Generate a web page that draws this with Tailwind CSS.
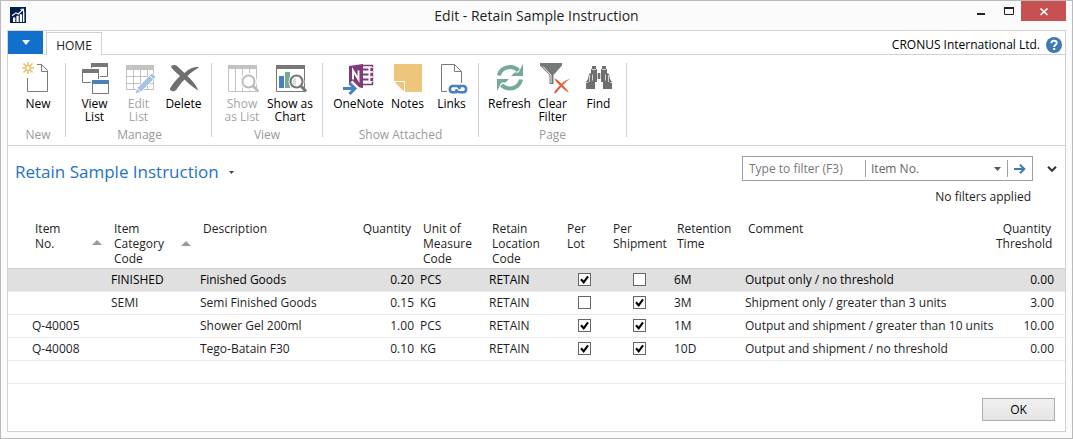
<!DOCTYPE html>
<html lang="en">
<head>
<meta charset="utf-8">
<meta name="viewport" content="width=device-width, initial-scale=1">
<title>Edit - Retain Sample Instruction</title>
<script src="https://cdn.jsdelivr.net/npm/@tailwindcss/browser@4"></script>
</head>
<body class="font-['Open_Sans','Noto_Sans',sans-serif] text-xs text-[#1e1e1e]">
<svg class="hidden" aria-hidden="true">
  <symbol id="tick" viewBox="0 0 13 13"><path d="M3 6.2 5.7 9.3 10 3.4" fill="none" stroke="#000" stroke-width="2.1"/></symbol>
  <symbol id="sort" viewBox="0 0 10 5"><path d="M5 0 10 5H0z" fill="#9b9b9b"/></symbol>
</svg>
<div class="flex min-h-screen flex-col border border-[#bababa] bg-[#fbfbfb] px-1.5 pb-1.5">
  <header class="grid h-[29px] grid-cols-[1fr_auto_1fr] items-start">
    <svg class="mt-1.5 ml-[3px] h-4 w-4" viewBox="0 0 16 16" aria-hidden="true">
      <path fill="#00204f" d="M0 0h16v16H0z"/>
      <path fill="#fff" d="M3 10.5h2.3V15H3zM6.4 8.8h2.3V15H6.4zM9.8 7.2h2.3V15H9.8zM13 4.5h1.4V15H13z"/>
      <path d="M2 8.8 6 5.8 8.3 7 13 2.5M10.5 2.3H13.5V5" fill="none" stroke="#fff" stroke-width="1.1"/>
    </svg>
    <h1 class="pt-1 text-sm leading-[22px]">Edit - Retain Sample Instruction</h1>
    <div class="flex justify-end">
      <button type="button" aria-label="Minimize" class="flex h-5 w-[27px] items-center justify-center"><svg class="h-5 w-[27px]" viewBox="0 0 27 20"><path fill="#222" d="M10 12h8v2h-8z"/></svg></button>
      <button type="button" aria-label="Maximize" class="h-5 w-[27px]"><svg class="h-5 w-[27px]" viewBox="0 0 27 20"><path d="M10.500 7.500h9v6h-9z" fill="none" stroke="#222"/><path fill="#222" d="M10 6h10v2H10z"/></svg></button>
      <button type="button" aria-label="Close" class="h-5 w-[45px] bg-[#c75050]"><svg class="h-5 w-[45px]" viewBox="0 0 45 20"><path d="m19.500 7.500 7 6.500M26.500 7.500l-7 6.500" stroke="#fff" stroke-width="1.7"/></svg></button>
    </div>
  </header>

  <main class="flex grow flex-col border border-[#d2d2d2] bg-white">
    <nav class="flex h-6 items-stretch">
      <button type="button" aria-label="Application menu" class="mb-px flex w-[35px] items-center justify-center bg-[#1170cb]"><svg class="h-[5px] w-2" viewBox="0 0 8 5"><path fill="#fff" d="M0 0h8L4 5z"/></svg></button>
      <span class="w-[3px] border-b border-[#d2d2d2]"></span>
      <a href="#home" class="mt-px flex w-14 items-center justify-center border-x border-t border-[#d2d2d2] bg-white pt-1 text-[#222]">HOME</a>
      <div class="flex grow items-center justify-end gap-1.5 border-b border-[#d2d2d2] pt-1 pr-[3px] text-black">
        <span>CRONUS International Ltd.</span>
        <button type="button" aria-label="Help"><svg class="h-4 w-4" viewBox="0 0 16 16"><circle cx="8" cy="8" r="8" fill="#4179b5"/><path d="M5.300 6.200C5.400 4.300 6.500 3.700 8 3.700c1.600 0 2.700.8 2.700 2.200 0 1.900-2.500 1.900-2.500 4" fill="none" stroke="#fff" stroke-width="1.900"/><path fill="#fff" d="M7.200 11h2v2h-2z"/></svg></button>
      </div>
    </nav>

    <div id="home" class="flex h-[91px] items-stretch border-b border-[#d2d2d2] pt-1.5 text-center leading-[13px] text-black">
      <section aria-label="New" class="flex w-[57px] flex-col">
        <div class="flex grow justify-center pl-[3px]">
          <button type="button" class="flex w-11 flex-col items-center gap-0.5">
            <svg class="h-[34px] w-[34px]" viewBox="21 61 34 34"><path d="M37 64.500h4.500l6 6v21h-20V78M41.500 64.500v7h6" fill="none" stroke="#7b7b7b"/><path d="M28 62v4M28 70v4M22 68h4M30 68h4M23.500 63.500l3 3M29.500 69.500l3 3M32.500 63.500l-3 3M26.500 69.500l-3 3" stroke="#ecbf6b" stroke-width="1.500"/><circle cx="28" cy="68" r="2.300" fill="#fff" stroke="#ecbf6b" stroke-width="1.300"/></svg>
            <span>New</span>
          </button>
        </div>
        <h2 class="pb-1 pl-[3px] text-[#9a9a9a]">New</h2>
      </section>
      <span class="my-0.5 mb-2 w-px bg-[#d2d2d2]"></span>
      <section aria-label="Manage" class="flex w-[145px] flex-col">
        <div class="flex grow justify-center pl-0.5">
          <button type="button" class="flex w-[46px] flex-col items-center gap-0.5">
            <svg class="h-[34px] w-[34px]" viewBox="78 61 34 34"><g fill="#fff" stroke="#777"><path d="M91.500 63.500h16v13h-16z"/><path fill="#777" d="M91.500 63.500h16v3h-16z"/><path stroke="#fff" stroke-width="3" d="M82.500 69.500h16v13h-16z"/><path d="M82.500 69.500h16v13h-16z"/><path fill="#777" d="M82.500 69.500h16v3h-16z"/><path stroke="#fff" stroke-width="3" d="M92.500 80.500h16v13h-16z"/><path d="M92.500 80.500h16v13h-16z"/><path fill="#4a80bb" stroke="#4a80bb" d="M92.500 80.500h16v3h-16z"/></g></svg>
            <span>View<br>List</span>
          </button>
          <button type="button" disabled class="flex w-[42px] flex-col items-center gap-0.5 text-[#a5a5a5]">
            <svg class="h-[34px] w-[34px]" viewBox="122 61 34 34"><path d="M126.500 65.500h27v24h-27zM126.500 76.500h27M126.500 83.500h27M133.500 70v19M140.500 70v19M147.500 70v19" fill="none" stroke="#c2c2c2"/><path fill="#c2c2c2" d="M126 65h28v5h-28z"/><path d="m135 94 2-6 15-15 4 4-15 15z" fill="#a7c3e1" stroke="#fff" stroke-width=".8"/><path d="m149.500 75.500 4 4M137 88l4 4" stroke="#fff"/></svg>
            <span>Edit<br>List</span>
          </button>
          <button type="button" class="flex w-12 flex-col items-center gap-0.5">
            <svg class="h-[34px] w-[34px]" viewBox="167 61 34 34"><path fill="#6f6f6f" d="M171 67c0-2 4-3 6-1l7.500 7C189 69 194 66 199 67.500c-4 2-8 5-11.500 8.500 4 4 8 8 11 14.500-4-2-10-7-14-11-4 4-6 7-8 10-2 3-7 2-6.500-1 2-4 6-8.500 10-12.500-3-3-6-5-9-9z"/></svg>
            <span>Delete</span>
          </button>
        </div>
        <h2 class="pb-1 pl-0.5 text-[#9a9a9a]">Manage</h2>
      </section>
      <span class="my-0.5 mb-2 w-px bg-[#d2d2d2]"></span>
      <section aria-label="View" class="flex w-[110px] flex-col">
        <div class="flex grow justify-center">
          <button type="button" disabled class="flex w-[46px] flex-col items-center gap-0.5 text-[#a5a5a5]">
            <svg class="h-[34px] w-[34px]" viewBox="224 61 34 34"><path d="M227.500 65.500h28v26h-28zM234.500 69v22M241.500 69v22M248.500 69v22" fill="none" stroke="#c2c2c2"/><path fill="#c2c2c2" d="M227 65h29v4h-29z"/><circle cx="247.500" cy="81.500" r="6.500" fill="#fff" stroke="#fff" stroke-width="4"/><circle cx="247.500" cy="81.500" r="6" fill="#fff" stroke="#bdbdbd" stroke-width="2"/><path d="m252 86 5.500 5.500" stroke="#bdbdbd" stroke-width="3"/></svg>
            <span>Show<br>as List</span>
          </button>
          <button type="button" class="flex w-[50px] flex-col items-center gap-0.5">
            <svg class="h-[34px] w-[34px]" viewBox="272 61 34 34"><path d="M275.500 65.500h28v26h-28z" fill="#fff" stroke="#777"/><path fill="#777" d="M275 65h29v4h-29z"/><path fill="#4a80bb" d="M278 76h5v12h-5z"/><path fill="#76a996" d="M284 72h5v16h-5z"/><path fill="#777" d="M290 77h5v11h-5z"/><circle cx="295.500" cy="81.500" r="6" fill="#fff" fill-opacity=".75" stroke="#fff" stroke-width="4"/><circle cx="295.500" cy="81.500" r="6" fill="none" stroke="#777" stroke-width="2.200"/><path d="m300 86 5 5.500" stroke="#777" stroke-width="3"/></svg>
            <span>Show as<br>Chart</span>
          </button>
        </div>
        <h2 class="pb-1 text-[#9a9a9a]">View</h2>
      </section>
      <span class="my-0.5 mb-2 w-px bg-[#d2d2d2]"></span>
      <section aria-label="Show Attached" class="flex w-[155px] flex-col">
        <div class="flex grow justify-center pl-1">
          <button type="button" class="flex w-[54px] flex-col items-center gap-0.5">
            <svg class="h-[34px] w-[34px]" viewBox="341 61 34 34"><path d="M362 65.500h9.500v19H362" fill="#fff" stroke="#80397b" stroke-width="1.500"/><path d="M362 69.500h5.500M362 74.500h5.500M362 79.500h5.500" stroke="#80397b" stroke-width="1.800"/><path d="M369 67.500h3.500v4H369zM369 72.500h3.500v4H369zM369 77.500h3.500v4H369z" fill="#80397b" stroke="#fff" stroke-width=".7"/><path fill="#80397b" d="m348 66 14-2v24l-14-2z"/><path d="M352 79.500v-9l5.500 9v-9" fill="none" stroke="#fff" stroke-width="1.900"/><path d="M341 88.500h14M349.500 82.500l6 6-6 6" fill="none" stroke="#fff" stroke-width="5.500"/><path d="M342 88.500h12M348.500 83l5.500 5.500-5.500 5.500" fill="none" stroke="#4a80bb" stroke-width="3"/></svg>
            <span>OneNote</span>
          </button>
          <button type="button" class="flex w-11 flex-col items-center gap-0.5">
            <svg class="h-[34px] w-[34px]" viewBox="390 61 34 34"><path fill="#edc67c" d="M393 64h28v28h-17L393 81z"/><path d="M393 81.500h10.500V92" fill="none" stroke="#fff"/><path fill="#edc67c" d="M393.500 82.200h9.300v9.300z"/></svg>
            <span>Notes</span>
          </button>
          <button type="button" class="flex w-11 flex-col items-center gap-0.5">
            <svg class="h-[34px] w-[34px]" viewBox="434 61 34 34"><path d="M446 91.500h-5.500v-27h13l7 7V83M453.500 64.500v7h7" fill="none" stroke="#7b7b7b"/><path d="M456 92.300h-4.500a3.200 3.200 0 0 1 0-6.300h4c2 0 3 1.500 3.500 3M457 86h5.500a3.200 3.200 0 0 1 0 6.300h-3.500c-2 0-3.500-1-4-3" fill="none" stroke="#4a80bb" stroke-width="2.600"/></svg>
            <span>Links</span>
          </button>
        </div>
        <h2 class="pb-1 text-[#9a9a9a]">Show Attached</h2>
      </section>
      <span class="my-0.5 mb-2 w-px bg-[#d2d2d2]"></span>
      <section aria-label="Page" class="flex w-[147px] flex-col">
        <div class="flex grow justify-center pl-1.5">
          <button type="button" class="flex w-[46px] flex-col items-center gap-0.5">
            <svg class="h-[34px] w-[34px]" viewBox="493 61 34 34"><path d="M499 75.500c1-5.500 6-8.500 11-8.500 4 0 6.500 1.500 8.500 3.500M521 79.500c-1 5.500-6 9-11 9-4 0-6.500-1.500-8.500-3.500" fill="none" stroke="#76a996" stroke-width="4"/><path fill="#76a996" d="M523 64v12h-12l3.500-3.500h4zM497 91V79h12l-3.500 3.500h-4z"/></svg>
            <span>Refresh</span>
          </button>
          <button type="button" class="flex w-10 flex-col items-center gap-0.5">
            <svg class="h-[34px] w-[34px]" viewBox="536 61 34 34"><path fill="#777" d="M540 63h22v2.500l-8.500 9.500v9h-4v-9L540 65.500z"/><path d="M543 66.500 551 75v8" fill="none" stroke="#fff" stroke-width=".9"/><path fill="#d9613f" stroke="#fff" stroke-width=".6" d="M554 79c2-1 4 1 7.500 4.500 3-2.800 6-4.500 9-5-2 1.500-5 4-7.300 6.700 2.300 2.500 5 5 6.300 7.800-3-1-5.700-3.500-8.200-5.800-2.300 2-3.300 4-4.800 5.800-1 1-3 .5-2.500-1 1.200-2 3.500-4.500 5.500-6.500-2-2.200-4.500-4.500-5.500-6.500z"/></svg>
            <span>Clear<br>Filter</span>
          </button>
          <button type="button" class="flex w-[52px] flex-col items-center gap-0.5">
            <svg class="h-[34px] w-[34px]" viewBox="582 61 34 34"><path fill="#6f6f6f" d="M592 66h4v3h1v4h4v-4h1v-3h4v3h1v4l2 1 1 5 2 3v7h-9v-7h-2v-3h-4v3h-2v7h-9v-7l2-3 1-5 2-1v-4h1z"/><path d="M592 69.500h4M602 69.500h4M597.500 73v8M600.500 73v8M589.500 75v7M608.500 75v7M586 82.500h2M610 82.500h2M592.500 74.500v6M605.500 74.500v6" stroke="#fff" stroke-width=".7"/></svg>
            <span>Find</span>
          </button>
        </div>
        <h2 class="pb-1 text-[#9a9a9a]">Page</h2>
      </section>
      <span class="my-0.5 mb-2 w-px bg-[#d2d2d2]"></span>
    </div>

    <div class="flex items-start justify-between pt-2.5 pr-2 pl-[7px]">
      <button type="button" class="flex items-center gap-2.5 text-[17px] leading-[32px] text-[#1f72c4]">Retain Sample Instruction <svg class="h-[3px] w-[5px]" viewBox="0 0 5 3"><path fill="#444" d="M0 0h5L2.500 3z"/></svg></button>
      <form class="flex items-center gap-3.5">
        <div class="flex h-[25px] w-[291px] items-center border border-[#a0a0a0] text-[#666]">
          <input type="text" aria-label="Type to filter" placeholder="Type to filter (F3)" class="w-[122px] pl-1.5 outline-none placeholder:text-[#777]">
          <div class="grid grow items-center border-x border-[#a0a0a0]">
            <select aria-label="Filter field" class="h-[17px] w-full appearance-none pl-[5px] outline-none [grid-area:1/1]"><option>Item No.</option></select>
            <svg class="pointer-events-none mr-1.5 h-1 w-[7px] justify-self-end [grid-area:1/1]" viewBox="0 0 7 4"><path fill="#555" d="M0 0h7L3.500 4z"/></svg>
          </div>
          <button type="button" aria-label="Apply filter" class="flex w-6 justify-center"><svg class="h-[10px] w-3" viewBox="0 0 12 10"><path d="M0 5h10M6 .8 10.300 5 6 9.200" fill="none" stroke="#3f7ab8" stroke-width="2"/></svg></button>
        </div>
        <button type="button" aria-label="Expand filters"><svg class="h-1.5 w-[10px]" viewBox="0 0 10 6"><path d="m1 .8 4 4 4-4" fill="none" stroke="#333" stroke-width="2"/></svg></button>
      </form>
    </div>
    <p class="pr-[34px] text-right leading-[18px]">No filters applied</p>

    <table class="mt-3 w-full table-fixed border-collapse text-left leading-[15px]">
      <colgroup><col class="w-[21px]"><col class="w-[79px]"><col class="w-[89px]"><col class="w-[153px]"><col class="w-[67px]"><col class="w-[69px]"><col class="w-[75px]"><col class="w-[46px]"><col class="w-[64px]"><col class="w-[71px]"><col><col class="w-[67px]"><col class="w-2"></colgroup>
      <thead>
        <tr class="h-[50px] border-b border-[#d0d0d0] align-top [&>th]:px-1.5 [&>th]:pt-[3px] [&>th]:font-normal">
          <th></th>
          <th><div class="flex items-end justify-between">Item<br>No.<svg class="mb-1.5 h-[5px] w-[10px]"><use href="#sort"/></svg></div></th>
          <th><div class="flex items-center justify-between">Item<br>Category<br>Code<svg class="h-[5px] w-[10px]"><use href="#sort"/></svg></div></th>
          <th>Description</th><th class="text-right">Quantity</th><th>Unit of Measure Code</th><th>Retain Location Code</th><th>Per<br>Lot</th><th>Per Shipment</th><th>Retention Time</th><th>Comment</th><th class="text-right">Quantity Threshold</th><th></th>
        </tr>
      </thead>
      <tbody class="whitespace-nowrap [&_td]:px-[3px] [&>tr]:h-[23px] [&>tr]:border-b [&>tr]:border-[#ebebeb]">
        <tr class="bg-[#e0e0e0] text-black">
          <td></td><td></td><td>FINISHED</td><td>Finished Goods</td><td class="text-right">0.20</td><td>PCS</td><td>RETAIN</td>
          <td><label class="mx-auto grid w-[13px]"><input type="checkbox" checked aria-label="Per lot, Finished Goods" class="peer h-[13px] w-[13px] appearance-none border border-[#666] bg-white [grid-area:1/1]"><svg class="pointer-events-none hidden h-[13px] w-[13px] peer-checked:block [grid-area:1/1]"><use href="#tick"/></svg></label></td>
          <td><label class="mx-auto grid w-[13px]"><input type="checkbox" aria-label="Per shipment, Finished Goods" class="peer h-[13px] w-[13px] appearance-none border border-[#666] bg-white [grid-area:1/1]"><svg class="pointer-events-none hidden h-[13px] w-[13px] peer-checked:block [grid-area:1/1]"><use href="#tick"/></svg></label></td>
          <td>6M</td><td>Output only / no threshold</td><td class="text-right">0.00</td><td></td>
        </tr>
        <tr>
          <td></td><td></td><td>SEMI</td><td>Semi Finished Goods</td><td class="text-right">0.15</td><td>KG</td><td>RETAIN</td>
          <td><label class="mx-auto grid w-[13px]"><input type="checkbox" aria-label="Per lot, Semi Finished Goods" class="peer h-[13px] w-[13px] appearance-none border border-[#666] bg-white [grid-area:1/1]"><svg class="pointer-events-none hidden h-[13px] w-[13px] peer-checked:block [grid-area:1/1]"><use href="#tick"/></svg></label></td>
          <td><label class="mx-auto grid w-[13px]"><input type="checkbox" checked aria-label="Per shipment, Semi Finished Goods" class="peer h-[13px] w-[13px] appearance-none border border-[#666] bg-white [grid-area:1/1]"><svg class="pointer-events-none hidden h-[13px] w-[13px] peer-checked:block [grid-area:1/1]"><use href="#tick"/></svg></label></td>
          <td>3M</td><td>Shipment only / greater than 3 units</td><td class="text-right">3.00</td><td></td>
        </tr>
        <tr>
          <td></td><td>Q-40005</td><td></td><td>Shower Gel 200ml</td><td class="text-right">1.00</td><td>PCS</td><td>RETAIN</td>
          <td><label class="mx-auto grid w-[13px]"><input type="checkbox" checked aria-label="Per lot, Shower Gel 200ml" class="peer h-[13px] w-[13px] appearance-none border border-[#666] bg-white [grid-area:1/1]"><svg class="pointer-events-none hidden h-[13px] w-[13px] peer-checked:block [grid-area:1/1]"><use href="#tick"/></svg></label></td>
          <td><label class="mx-auto grid w-[13px]"><input type="checkbox" checked aria-label="Per shipment, Shower Gel 200ml" class="peer h-[13px] w-[13px] appearance-none border border-[#666] bg-white [grid-area:1/1]"><svg class="pointer-events-none hidden h-[13px] w-[13px] peer-checked:block [grid-area:1/1]"><use href="#tick"/></svg></label></td>
          <td>1M</td><td>Output and shipment / greater than 10 units</td><td class="text-right">10.00</td><td></td>
        </tr>
        <tr>
          <td></td><td>Q-40008</td><td></td><td>Tego-Batain F30</td><td class="text-right">0.10</td><td>KG</td><td>RETAIN</td>
          <td><label class="mx-auto grid w-[13px]"><input type="checkbox" checked aria-label="Per lot, Tego-Batain F30" class="peer h-[13px] w-[13px] appearance-none border border-[#666] bg-white [grid-area:1/1]"><svg class="pointer-events-none hidden h-[13px] w-[13px] peer-checked:block [grid-area:1/1]"><use href="#tick"/></svg></label></td>
          <td><label class="mx-auto grid w-[13px]"><input type="checkbox" checked aria-label="Per shipment, Tego-Batain F30" class="peer h-[13px] w-[13px] appearance-none border border-[#666] bg-white [grid-area:1/1]"><svg class="pointer-events-none hidden h-[13px] w-[13px] peer-checked:block [grid-area:1/1]"><use href="#tick"/></svg></label></td>
          <td>10D</td><td>Output and shipment / no threshold</td><td class="text-right">0.00</td><td></td>
        </tr>
        <tr><td colspan="13"></td></tr>
      </tbody>
    </table>

    <footer class="mt-auto flex justify-end pr-[10px] pb-[10px]">
      <button type="button" class="h-[23px] w-[73px] border border-[#acacac] bg-linear-to-b from-[#f0f0f0] to-[#e5e5e5] text-black">OK</button>
    </footer>
  </main>
</div>
</body>
</html>
